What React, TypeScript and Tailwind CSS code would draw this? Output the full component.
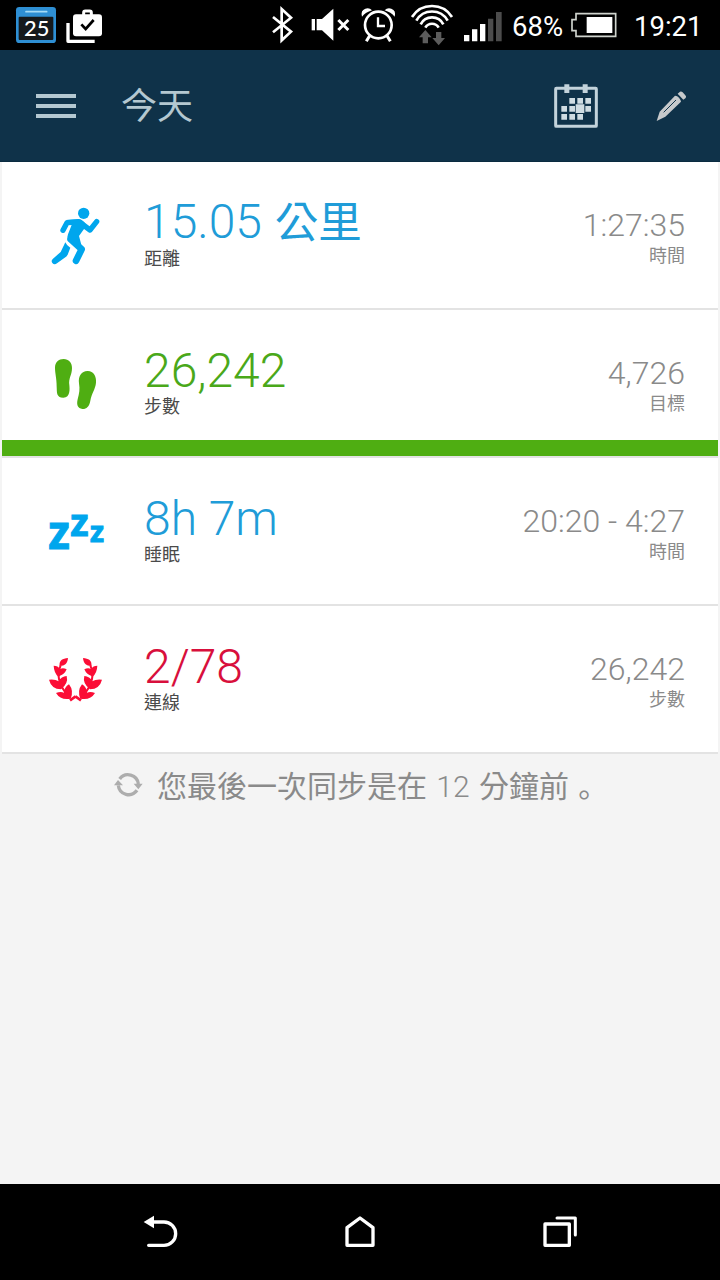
import type { ReactNode } from "react";
import clsx from "clsx";

const ROBOTO = "font-['Roboto','Noto_Sans_CJK_TC',sans-serif]";

// All icons are drawn on a grid of 3 units per pixel.
function Icon({
  box,
  className,
  children,
}: {
  box: string;
  className: string;
  children: ReactNode;
}) {
  return (
    <svg viewBox={box} className={clsx("block shrink-0 overflow-visible", className)} fill="none">
      {children}
    </svg>
  );
}

function StatusBar() {
  return (
    <div className="flex h-[50px] bg-black text-white">
      <Icon box="48 0 120 150" className="ml-4 h-[50px] w-10">
        <rect x="48" y="21" width="120" height="108" rx="10" fill="#2e8fd4" />
        <rect x="56" y="50" width="104" height="70" rx="3" fill="#15191c" />
        <path d="M78 35H140" stroke="#a5dcf7" strokeWidth="5" strokeLinecap="round" />
        <text
          x="110"
          y="107"
          fill="#fff"
          fontSize="62"
          fontFamily="Lato, sans-serif"
          fontWeight="500"
          textAnchor="middle"
          textLength="76"
          lengthAdjust="spacingAndGlyphs"
        >
          25
        </text>
      </Icon>
      <Icon box="198 0 108 150" className="ml-2.5 h-[50px] w-9">
        <path d="M204 69V124H284" stroke="#fff" strokeWidth="10" strokeLinejoin="round" />
        <rect x="219" y="43" width="87" height="66" rx="9" fill="#fff" />
        <path d="M251 46V38Q251 33 256 33H269Q274 33 274 38V46" stroke="#fff" strokeWidth="9" />
        <path d="M244 73L257 87L281 60" stroke="#000" strokeWidth="8" />
      </Icon>

      <Icon box="35 0 63 150" className="ml-[170px] h-[50px] w-[21px]">
        <path d="M38 51L92 95L64 121V27L92 53L38 97" stroke="#fff" strokeWidth="8" />
      </Icon>
      <Icon box="154 0 117 150" className="ml-[18px] h-[50px] w-[39px]">
        <rect x="156" y="57" width="10" height="34" fill="#fff" />
        <path d="M171 57H187L221 26V122L187 91H171Z" fill="#fff" />
        <path d="M236 60L266 90M266 60L236 90" stroke="#fff" strokeWidth="9" />
      </Icon>
      <Icon box="304 0 105 150" className="ml-[11px] h-[50px] w-[35px]">
        <circle cx="356" cy="75" r="40" stroke="#fff" strokeWidth="8" />
        <path d="M355 52V78H376" stroke="#fff" strokeWidth="7" />
        <path d="M330 107L320 124M382 107L392 124" stroke="#fff" strokeWidth="9" />
        <path
          d="M307 50Q302 31 317 26Q329 22 337 31Q318 37 307 50ZM405 50Q410 31 395 26Q383 22 375 31Q394 37 405 50Z"
          fill="#fff"
        />
      </Icon>
      <Icon box="453 0 126 150" className="ml-[15px] h-[50px] w-[42px]">
        <path
          d="M456 51A71 71 0 0 1 576 51M469 62A54 54 0 0 1 563 62M482 73A38 38 0 0 1 550 73M496 83A23 23 0 0 1 536 83"
          stroke="#fff"
          strokeWidth="8"
        />
        <path
          d="M496 90L515 112H504V130H488V112H477ZM536 136L555 114H544V96H528V114H517Z"
          fill="#5c5c5c"
        />
      </Icon>
      <Icon box="612 0 114 150" className="ml-[11px] h-[50px] w-[38px]">
        <path d="M612 105H628V124H612ZM636 88H652V124H636ZM660 72H676V124H660Z" fill="#fff" />
        <path d="M684 56H700V124H684ZM708 36H725V124H708Z" fill="#4c4c4c" />
      </Icon>
      <span className="ml-2.5 w-[52px] pt-0.5 text-[27.5px] leading-[50px] whitespace-nowrap">
        68%
      </span>
      <Icon box="274 0 138 150" className="ml-[7px] h-[50px] w-[46px]">
        <path d="M289 41H408V109H289V92H277V59H289Z" stroke="#cfd3cd" strokeWidth="5" />
        <rect x="321" y="51" width="77" height="48" fill="#fff" />
      </Icon>
      <span className="ml-[17px] pt-0.5 text-[27.5px] leading-[50px] whitespace-nowrap">19:21</span>
    </div>
  );
}

function Header() {
  return (
    <div className="flex h-28 items-center border-b border-[#0a2b40] bg-[#0f3249] text-[#b4c8d1]">
      <div className="ml-9 flex w-10 flex-col gap-1.5">
        <div className="h-1 bg-[#b4c8d1]" />
        <div className="h-1 bg-[#b4c8d1]" />
        <div className="h-1 bg-[#b4c8d1]" />
      </div>
      <h1 className="ml-[45px] flex-1 pt-[3px] text-[36px] leading-[36px]">今天</h1>
      <Icon box="222 252 132 132" className="size-11">
        <rect x="227" y="265" width="122" height="114" rx="2" stroke="#c3d3db" strokeWidth="9" />
        <path d="M253 253H268V279H253ZM308 253H323V279H308Z" fill="#c3d3db" />
        <path
          d="M268 294h17v17h-17zM292 294h17v17h-17zM316 294h17v17h-17zM244 318h17v17h-17zM268 318h17v17h-17zM316 318h17v17h-17zM244 342h17v17h-17zM268 342h17v17h-17zM292 342h17v17h-17zM287 313h26v26h-26z"
          fill="#cfdce2"
        />
      </Icon>
      <Icon box="528 270 93 96" className="mr-[33px] ml-[58px] h-8 w-[31px]">
        <path d="M530 363L539 335L585 287Q592 287 597 293T603 305L556 350Z" fill="#c6c9cb" />
        <path d="M593 281L600 275Q604 273 608 277L616 286Q620 290 617 294L610 299Z" fill="#c6c9cb" />
        <path d="M551 337L588 300" stroke="#0f3249" strokeWidth="3" />
      </Icon>
    </div>
  );
}

function RunnerIcon() {
  return (
    <Icon box="150 138 150 180" className="ml-12 h-[60px] w-[50px]">
      <circle cx="251" cy="160" r="17" fill="#00a6ed" />
      <g stroke="#00a6ed" strokeLinecap="round" strokeLinejoin="round">
        <path d="M189 211L201 188L238 186L270 210L290 185" strokeWidth="16" />
        <path d="M212 238L245 268L228 302" strokeWidth="20" />
      </g>
      <path
        d="M198 180L236 177Q252 180 259 197L237 228L244 254L208 246Q199 238 204 223L217 190Z"
        fill="#00a6ed"
      />
      <path
        d="M196 247Q200 257 211 263L203 284Q200 290 194 293L171 310Q163 316 157 309Q152 302 159 296L182 276Z"
        fill="#00a6ed"
      />
    </Icon>
  );
}

function FeetIcon() {
  return (
    <Icon box="162 84 130 156" className="ml-[52px] h-[52px] w-[43.33px]">
      <path
        d="M165 113C165 96 176 87 191 87C206 87 216 98 216 114C216 135 205 145 208 165C209 175 212 203 190 203C168 203 171 185 170 170C170 145 165 130 165 113Z"
        fill="#4fae12"
      />
      <path
        d="M262 123C280 122 290 138 288 158C286 178 275 190 271 212C268 230 258 238 247 237C233 236 229 224 233 208C238 190 240 178 237 160C234 138 245 124 262 123Z"
        fill="#4fae12"
      />
    </Icon>
  );
}

function SleepIcon() {
  return (
    <Icon box="144 99 168 114" className="ml-[46px] h-[38px] w-14">
      <g
        fill="#00a6ed"
        stroke="#00a6ed"
        strokeWidth="3"
        fontFamily="'Open Sans', sans-serif"
        fontWeight="700"
      >
        <text x="145" y="206" fontSize="141" textLength="65" lengthAdjust="spacingAndGlyphs">z</text>
        <text x="211" y="168" fontSize="115" textLength="55" lengthAdjust="spacingAndGlyphs">z</text>
        <text x="270" y="185" fontSize="84" textLength="42" lengthAdjust="spacingAndGlyphs">z</text>
      </g>
    </Icon>
  );
}

function LaurelBranch() {
  return (
    <>
      <path d="M179 108C176 92 188 85 204 84C203 99 195 108 179 108Z" />
      <path d="M161 107Q174 107 180 117Q189 112 200 118Q193 134 180 137L176 141Q162 130 161 107Z" />
      <path d="M147 149Q166 147 176 154Q184 139 200 138Q206 160 183 178Q154 177 147 149Z" />
      <path d="M168 189Q182 183 192 188Q193 171 207 163Q222 182 212 206Q182 212 168 189Z" />
      <path d="M182 106Q173 128 177 147Q182 172 203 195" fill="none" stroke="#fb0d36" strokeWidth="6" />
      <path d="M210 211L227 199" fill="none" stroke="#fb0d36" strokeWidth="8" />
    </>
  );
}

function LaurelIcon() {
  return (
    <Icon box="147 81 162 135" className="ml-[47px] h-[45px] w-[54px]">
      <g fill="#fb0d36">
        <LaurelBranch />
        <g transform="translate(453 0) scale(-1 1)">
          <LaurelBranch />
        </g>
      </g>
    </Icon>
  );
}

const rows = [
  {
    icon: <RunnerIcon />,
    iconPad: "pt-11",
    color: "text-[#209cd8]",
    // the CJK unit is set heavier than the digits
    value: (
      <div className="-mt-px">
        15.05 <span className="ml-px text-[43.5px] leading-[0] font-normal">公里</span>
      </div>
    ),
    label: "距離",
    side: "1:27:35",
    sideLabel: "時間",
  },
  {
    icon: <FeetIcon />,
    iconPad: "pt-12",
    color: "text-[#4aa81a]",
    value: "26,242",
    label: "步數",
    side: "4,726",
    sideLabel: "目標",
    progress: 100,
  },
  {
    icon: <SleepIcon />,
    iconPad: "pt-[55px]",
    color: "text-[#209cd8]",
    value: "8h 7m",
    label: "睡眠",
    side: "20:20 - 4:27",
    sideLabel: "時間",
  },
  {
    icon: <LaurelIcon />,
    iconPad: "pt-[51px]",
    color: "text-[#d80f3c]",
    value: "2/78",
    label: "連線",
    side: "26,242",
    sideLabel: "步數",
  },
];

function StatRow({ row }: { row: (typeof rows)[number] }) {
  return (
    <div className="flex h-[148px] flex-col border-b-2 border-[#e3e3e3] bg-white">
      <div className="flex flex-1">
        <div className={clsx("w-[142px]", row.iconPad)}>{row.icon}</div>
        <div className="flex-1 pt-[37px]">
          <div className={clsx("flex h-12 text-[48px] leading-[48px] font-light", row.color)}>
            {row.value}
          </div>
          <div className="mt-0.5 text-[18px] leading-5 text-[#4a4a4a]">{row.label}</div>
        </div>
        <div className="pt-[47px] pr-[33px] text-right text-[#8a8a8a]">
          <div className="text-[32px] leading-8 font-light">{row.side}</div>
          <div className="mt-[5px] text-[18px] leading-5">{row.sideLabel}</div>
        </div>
      </div>
      {row.progress && (
        <div className="h-4">
          <div className="h-4 bg-[#4fae12]" style={{ width: `${row.progress}%` }} />
        </div>
      )}
    </div>
  );
}

function SyncStatus() {
  return (
    <div className="flex pt-[17px] text-[#8a8a8a]">
      <Icon box="339 423 90 81" className="ml-[113px] h-[27px] w-[30px]">
        <g stroke="#adadad" strokeWidth="10">
          <path d="M359 447A31 31 0 0 1 415 462" />
          <path d="M411 481A31 31 0 0 1 355 466" />
        </g>
        <path d="M342 466L354 450L369 466ZM401 461H428L415 478Z" fill="#adadad" />
      </Icon>
      <p className="ml-3.5 pt-px text-[30px] leading-[30px] font-light [word-spacing:2px] whitespace-nowrap">
        <span className="font-normal">您最後一次同步是在</span> 12{" "}
        <span className="font-normal">分鐘前</span>{" "}
        <span className="font-['Noto_Sans_CJK_SC',sans-serif] leading-[0] font-normal">。</span>
      </p>
    </div>
  );
}

function NavBar() {
  return (
    <div className="flex h-24 items-center justify-center gap-[164px] bg-black">
      <Icon box="66 103 108 108" className="size-9">
        <path d="M96 127H132A35 35 0 0 1 132 197H86" stroke="#fff" strokeWidth="10" strokeLinecap="round" />
        <path d="M71 127L102 108V146Z" fill="#fff" />
      </Icon>
      <Icon box="666 103 108 108" className="size-9">
        <path
          d="M681 144L720 115L759 144V197H681Z"
          stroke="#fff"
          strokeWidth="10"
          strokeLinejoin="round"
        />
      </Icon>
      <Icon box="1266 103 108 108" className="size-9">
        <rect x="1275" y="133" width="73" height="64" stroke="#fff" strokeWidth="10" strokeLinejoin="round" />
        <path d="M1311 115H1366V166" stroke="#fff" strokeWidth="9" strokeLinecap="round" strokeLinejoin="round" />
      </Icon>
    </div>
  );
}

export default function App() {
  return (
    <div className={clsx("flex h-[1280px] w-[720px] flex-col overflow-hidden bg-[#f4f4f4]", ROBOTO)}>
      <StatusBar />
      <Header />
      <main className="flex-1">
        <div className="px-0.5">
          {rows.map((row) => (
            <StatRow key={row.label} row={row} />
          ))}
        </div>
        <SyncStatus />
      </main>
      <NavBar />
    </div>
  );
}
